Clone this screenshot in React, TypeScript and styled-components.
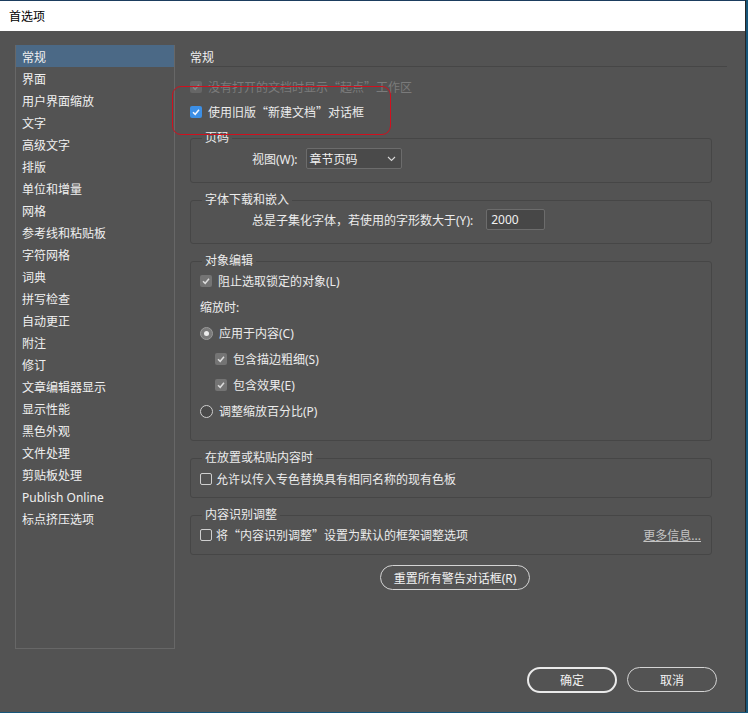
import styled, { createGlobalStyle } from "styled-components";

const GlobalStyle = createGlobalStyle`
  html, body {
    margin: 0;
    padding: 0;
    background: #17567a;
  }
  body {
    font-family: "Noto Sans", "Noto Sans CJK SC", sans-serif;
    font-size: 12px;
  }
`;

const NAV_ITEMS = [
  "常规",
  "界面",
  "用户界面缩放",
  "文字",
  "高级文字",
  "排版",
  "单位和增量",
  "网格",
  "参考线和粘贴板",
  "字符网格",
  "词典",
  "拼写检查",
  "自动更正",
  "附注",
  "修订",
  "文章编辑器显示",
  "显示性能",
  "黑色外观",
  "文件处理",
  "剪贴板处理",
  "Publish Online",
  "标点挤压选项",
];

const Window = styled.div`
  position: relative;
  width: 746px;
  height: 712px;
  background: #535353;
  border-right: 1px solid #262626;
  box-sizing: border-box;
  display: flex;
  flex-direction: column;
  color: #e8e8e8;
`;

const TitleBar = styled.div`
  height: 31px;
  box-sizing: border-box;
  background: #fff;
  border-top: 1px solid #1b3d5e;
  display: flex;
  align-items: center;
  padding-left: 9px;
  color: #000;
  font-size: 12px;
`;

const Body = styled.div`
  display: flex;
  padding: 14px 0 0 15px;
`;

const Sidebar = styled.ul`
  list-style: none;
  margin: 0;
  padding: 0;
  width: 160px;
  height: 604px;
  box-sizing: border-box;
  border: 1px solid #676767;
  border-top: none;
`;

const NavItem = styled.li<{ $active?: boolean }>`
  height: 22px;
  box-sizing: border-box;
  padding: 3px 0 0 6px;
  line-height: 19px;
  background: ${(p) => (p.$active ? "#4b6986" : "transparent")};
  color: #f0f0f0;
  white-space: nowrap;
`;

const Content = styled.div`
  margin-left: 15px;
  width: 537px;
  display: flex;
  flex-direction: column;
`;

const Header = styled.div`
  height: 22px;
  box-sizing: border-box;
  padding-top: 5px;
  line-height: 16px;
  border-bottom: 1px solid #464646;
  color: #f0f0f0;
`;

const TopOptions = styled.div`
  margin-top: 8px;
  display: flex;
  flex-direction: column;
  gap: 1px;
`;

const Row = styled.div<{ $h?: number; $indent?: number }>`
  height: ${(p) => p.$h ?? 24}px;
  display: flex;
  align-items: center;
  padding-left: ${(p) => p.$indent ?? 0}px;
`;

const Label = styled.span<{ $disabled?: boolean; $gap?: number }>`
  margin-left: ${(p) => p.$gap ?? 6}px;
  color: ${(p) => (p.$disabled ? "#7b7b7b" : "#ececec")};
  white-space: nowrap;
`;

const Q = styled.span`
  font-family: "Noto Sans CJK SC", sans-serif;
`;

const Box = styled.span<{ $variant: "blue" | "grey" | "disabled" | "empty" }>`
  width: 12px;
  height: 12px;
  box-sizing: border-box;
  border-radius: 2px;
  flex-shrink: 0;
  display: flex;
  align-items: center;
  justify-content: center;
  background: ${(p) =>
    p.$variant === "blue"
      ? "#3c8fe6"
      : p.$variant === "grey"
      ? "#747474"
      : p.$variant === "disabled"
      ? "#666"
      : "transparent"};
  border: ${(p) => (p.$variant === "empty" ? "1px solid #cfcfcf" : "none")};
`;

type Variant = "blue" | "grey" | "disabled" | "empty";

const Check = ({ variant, label, gap }: { variant: Variant; label: React.ReactNode; gap?: number }) => {
  const stroke = variant === "blue" ? "#f2f6ff" : variant === "grey" ? "#dcdcdc" : "#858585";
  return (
    <>
      <Box $variant={variant}>
        {variant !== "empty" && (
          <svg width="10" height="10" viewBox="0 0 10 10">
            <polyline points="2,5.2 4.2,7.3 8,2.8" fill="none" stroke={stroke} strokeWidth="1.5" />
          </svg>
        )}
      </Box>
      <Label $disabled={variant === "disabled"} $gap={gap}>
        {label}
      </Label>
    </>
  );
};

const RadioDot = styled.span<{ $on?: boolean }>`
  width: 13px;
  height: 13px;
  box-sizing: border-box;
  border-radius: 50%;
  flex-shrink: 0;
  border: 1px solid ${(p) => (p.$on ? "#9a9a9a" : "#cfcfcf")};
  background: ${(p) => (p.$on ? "#7a7a7a" : "#4a4a4a")};
  display: flex;
  align-items: center;
  justify-content: center;
  &::after {
    content: "";
    display: ${(p) => (p.$on ? "block" : "none")};
    width: 5px;
    height: 5px;
    border-radius: 50%;
    background: #ececec;
  }
`;

const Group = styled.fieldset<{ $mt?: number; $pt?: number; $pb?: number }>`
  margin: ${(p) => p.$mt ?? 10}px 0 0 0;
  width: 522px;
  box-sizing: border-box;
  border: 1px solid #464646;
  border-radius: 3px;
  padding: ${(p) => p.$pt ?? 0}px 9px ${(p) => p.$pb ?? 0}px 9px;
  min-width: 0;
`;

const Legend = styled.legend`
  margin-left: 2px;
  padding: 0 3px;
  line-height: 14px;
  color: #ececec;
`;

const FieldRow = styled.div`
  height: 21px;
  display: flex;
  align-items: center;
  padding-left: 52px;
`;

const FieldLabel = styled.span<{ $gap: number }>`
  color: #ececec;
  margin-right: ${(p) => p.$gap}px;
  white-space: nowrap;
`;

const Select = styled.div`
  width: 96px;
  height: 21px;
  box-sizing: border-box;
  background: #4a4a4a;
  border: 1px solid #6c6c6c;
  border-radius: 2px;
  display: flex;
  align-items: center;
  justify-content: space-between;
  padding: 0 5px 0 3px;
  color: #f0f0f0;
`;

const NumberInput = styled.div`
  width: 59px;
  height: 21px;
  box-sizing: border-box;
  background: #474747;
  border: 1px solid #6c6c6c;
  border-radius: 2px;
  display: flex;
  align-items: center;
  padding-left: 4px;
  color: #f0f0f0;
`;

const MoreLink = styled.span`
  margin-left: auto;
  margin-right: 1px;
  color: #c4c4c4;
  text-decoration: underline;
  white-space: nowrap;
`;

const ResetRow = styled.div`
  margin-top: 10px;
  padding-left: 190px;
  display: flex;
`;

const PillButton = styled.button<{ $primary?: boolean; $w: number }>`
  width: ${(p) => p.$w}px;
  height: ${(p) => (p.$primary ? 26 : 25)}px;
  box-sizing: border-box;
  border-radius: 13px;
  background: transparent;
  border: ${(p) => (p.$primary ? "2px solid #eaeaea" : "1px solid #d4d4d4")};
  color: #f2f2f2;
  font-family: inherit;
  font-size: 12px;
  padding: 0;
  display: flex;
  align-items: center;
  justify-content: center;
`;

const Footer = styled.div`
  display: flex;
  justify-content: flex-end;
  gap: 10px;
  padding: 18px 28px 0 0;
`;

const Annotation = styled.div`
  position: absolute;
  left: 172px;
  top: 86px;
  width: 219px;
  height: 49px;
  box-sizing: border-box;
  border: 1px solid #d0101e;
  border-radius: 9px;
  pointer-events: none;
`;

export default function App() {
  return (
    <>
      <GlobalStyle />
      <Window>
        <TitleBar>首选项</TitleBar>
        <Body>
          <Sidebar>
            {NAV_ITEMS.map((item, i) => (
              <NavItem key={item} $active={i === 0}>
                {item}
              </NavItem>
            ))}
          </Sidebar>
          <Content>
            <Header>常规</Header>
            <TopOptions>
              <Row>
                <Check
                  variant="disabled"
                  label={
                    <>
                      没有打开的文档时显示<Q>“</Q>起点<Q>”</Q>工作区
                    </>
                  }
                />
              </Row>
              <Row>
                <Check
                  variant="blue"
                  label={
                    <>
                      使用旧版<Q>“</Q>新建文档<Q>”</Q>对话框
                    </>
                  }
                />
              </Row>
            </TopOptions>

            <Group $mt={7} $pt={3} $pb={13}>
              <Legend>页码</Legend>
              <FieldRow>
                <FieldLabel $gap={8}>视图(W):</FieldLabel>
                <Select>
                  <span>章节页码</span>
                  <svg width="9" height="6" viewBox="0 0 9 6">
                    <polyline points="1,1 4.5,4.5 8,1" fill="none" stroke="#d8d8d8" strokeWidth="1.1" />
                  </svg>
                </Select>
              </FieldRow>
            </Group>

            <Group $pt={2} $pb={13}>
              <Legend>字体下载和嵌入</Legend>
              <FieldRow>
                <FieldLabel $gap={13}>总是子集化字体，若使用的字形数大于(Y):</FieldLabel>
                <NumberInput>2000</NumberInput>
              </FieldRow>
            </Group>

            <Group $pt={0} $pb={16}>
              <Legend>对象编辑</Legend>
              <Row $h={26}>
                <Check variant="grey" label="阻止选取锁定的对象(L)" />
              </Row>
              <Row $h={26}>
                <Label $gap={0}>缩放时:</Label>
              </Row>
              <Row $h={26}>
                <RadioDot $on />
                <Label>应用于内容(C)</Label>
              </Row>
              <Row $h={26} $indent={15}>
                <Check variant="grey" label="包含描边粗细(S)" />
              </Row>
              <Row $h={26} $indent={15}>
                <Check variant="grey" label="包含效果(E)" />
              </Row>
              <Row $h={26}>
                <RadioDot />
                <Label>调整缩放百分比(P)</Label>
              </Row>
            </Group>

            <Group $pt={2} $pb={6}>
              <Legend>在放置或粘贴内容时</Legend>
              <Row>
                <Check variant="empty" label="允许以传入专色替换具有相同名称的现有色板" gap={4} />
              </Row>
            </Group>

            <Group $pt={1} $pb={7}>
              <Legend>内容识别调整</Legend>
              <Row>
                <Check
                  variant="empty"
                  gap={4}
                  label={
                    <>
                      将<Q>“</Q>内容识别调整<Q>”</Q>设置为默认的框架调整选项
                    </>
                  }
                />
                <MoreLink>更多信息...</MoreLink>
              </Row>
            </Group>

            <ResetRow>
              <PillButton $w={150}>重置所有警告对话框(R)</PillButton>
            </ResetRow>
          </Content>
        </Body>
        <Footer>
          <PillButton $primary $w={90}>确定</PillButton>
          <PillButton $w={90}>取消</PillButton>
        </Footer>
        <Annotation />
      </Window>
    </>
  );
}
